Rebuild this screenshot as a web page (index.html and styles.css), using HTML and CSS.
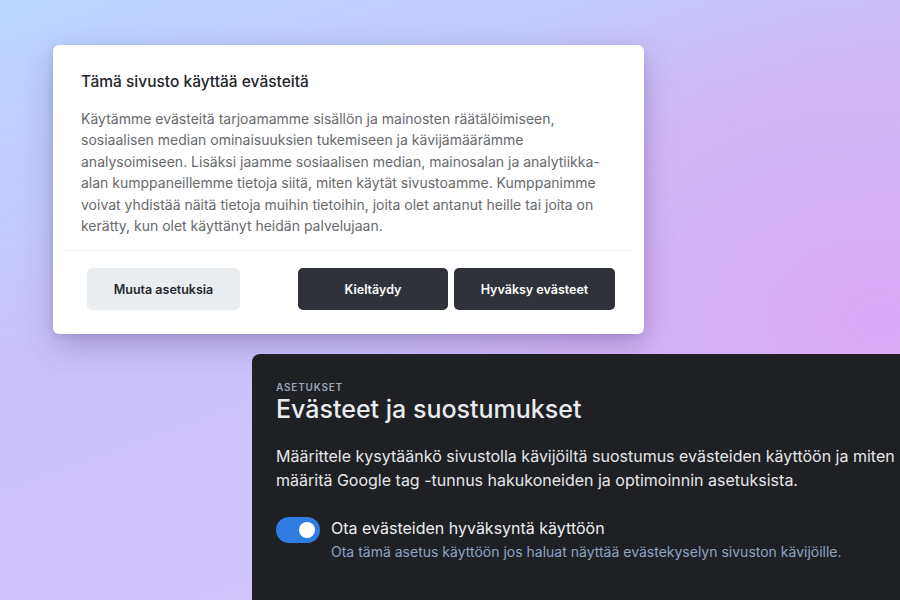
FILE: index.html
```html
<!DOCTYPE html>
<html lang="fi">
<head>
<meta charset="utf-8">
<title>Evästeet</title>
<link rel="stylesheet" href="styles.css">
</head>
<body>
<main class="canvas">
  <section class="consent">
    <div class="consent-body">
      <h2 class="consent-title">Tämä sivusto käyttää evästeitä</h2>
      <p class="consent-text">Käytämme evästeitä tarjoamamme sisällön ja mainosten räätälöimiseen, sosiaalisen median ominaisuuksien tukemiseen ja kävijämäärämme analysoimiseen. Lisäksi jaamme sosiaalisen median, mainosalan ja analytiikka-alan kumppaneillemme tietoja siitä, miten käytät sivustoamme. Kumppanimme voivat yhdistää näitä tietoja muihin tietoihin, joita olet antanut heille tai joita on kerätty, kun olet käyttänyt heidän palvelujaan.</p>
    </div>
    <hr class="divider">
    <div class="consent-actions">
      <button class="btn btn-light">Muuta asetuksia</button>
      <div class="actions-right">
        <button class="btn btn-dark">Kieltäydy</button>
        <button class="btn btn-dark">Hyväksy evästeet</button>
      </div>
    </div>
  </section>

  <section class="settings">
    <div class="eyebrow">ASETUKSET</div>
    <h1 class="settings-title">Evästeet ja suostumukset</h1>
    <p class="settings-text">Määrittele kysytäänkö sivustolla kävijöiltä suostumus evästeiden käyttöön ja miten määritä Google tag -tunnus hakukoneiden ja optimoinnin asetuksista.</p>
    <div class="toggle-row">
      <span class="toggle"><span class="knob"></span></span>
      <div class="toggle-labels">
        <div class="toggle-label">Ota evästeiden hyväksyntä käyttöön</div>
        <div class="toggle-help">Ota tämä asetus käyttöön jos haluat näyttää evästekyselyn sivuston kävijöille.</div>
      </div>
    </div>
  </section>
</main>
</body>
</html>
```

FILE: styles.css
```css
html, body {
  margin: 0;
  padding: 0;
  width: 900px;
  height: 600px;
  overflow: hidden;
}

body {
  font-family: Inter, "Noto Sans", "Liberation Sans", sans-serif;
  background:
    radial-gradient(ellipse 520px 380px at 880px 320px, rgba(219, 166, 247, 0.95), rgba(219, 168, 246, 0) 100%),
    linear-gradient(160deg, #b9d7fe 0%, #cbc2fa 40%, #d4c6fa 100%);
}

.canvas {
  display: flex;
  flex-direction: column;
  padding-top: 45px;
}

.consent {
  margin-left: 53px;
  width: 591px;
  box-sizing: border-box;
  background: #ffffff;
  border-radius: 6px;
  box-shadow: 0 12px 32px rgba(60, 40, 110, 0.28), 0 2px 6px rgba(60, 40, 110, 0.12);
  padding: 27px 11px 24px 11px;
}

.consent-body {
  padding: 0 17px;
}

.consent-title {
  margin: 0;
  font-size: 15.5px;
  line-height: 20px;
  font-weight: 500;
  color: #222428;
}

.consent-text {
  margin: 16px 0 0;
  font-size: 14px;
  line-height: 21.4px;
  color: #67696d;
}

.divider {
  border: 0;
  height: 1px;
  background: #eeeff1;
  margin: 14px 0 17px;
}

.consent-actions {
  display: flex;
  justify-content: space-between;
  align-items: center;
  padding: 0 18px 0 23px;
}

.actions-right {
  display: flex;
  gap: 6px;
}

.btn {
  font-family: inherit;
  font-size: 12.5px;
  font-weight: 600;
  height: 42px;
  min-width: 149px;
  padding: 0 25px;
  border: 0;
  border-radius: 5px;
}

.btn-light {
  background: #e9edf0;
  color: #26282c;
  min-width: 153px;
}

.btn-dark {
  background: #2f3339;
  color: #ffffff;
  min-width: 150px;
}

.btn-dark + .btn-dark {
  min-width: 161px;
}

.settings {
  margin-top: 20px;
  margin-left: 252px;
  width: 720px;
  height: 300px;
  box-sizing: border-box;
  background: #1f2024;
  border-radius: 8px;
  padding: 26px 24px;
}

.eyebrow {
  font-size: 10px;
  line-height: 14px;
  font-weight: 600;
  letter-spacing: 0.08em;
  color: #9aa6b9;
}

.settings-title {
  margin: 0;
  font-size: 25px;
  line-height: 31px;
  font-weight: 500;
  color: #e9ebee;
}

.settings-text {
  margin: 19px 0 0;
  width: 630px;
  font-size: 16px;
  line-height: 24px;
  color: #e6e7e9;
}

.toggle-row {
  display: flex;
  gap: 11px;
  margin-top: 25px;
}

.toggle {
  flex: none;
  width: 44px;
  height: 26px;
  border-radius: 13px;
  background: #2f7de1;
  display: flex;
  align-items: center;
  justify-content: flex-end;
  padding: 0 5px;
  box-sizing: border-box;
}

.knob {
  width: 16px;
  height: 16px;
  border-radius: 50%;
  background: #ffffff;
}

.toggle-labels {
  display: flex;
  flex-direction: column;
}

.toggle-label {
  font-size: 16px;
  line-height: 22px;
  color: #eceef0;
}

.toggle-help {
  margin-top: 4px;
  font-size: 14px;
  line-height: 18px;
  color: #8ea3c2;
}
```
